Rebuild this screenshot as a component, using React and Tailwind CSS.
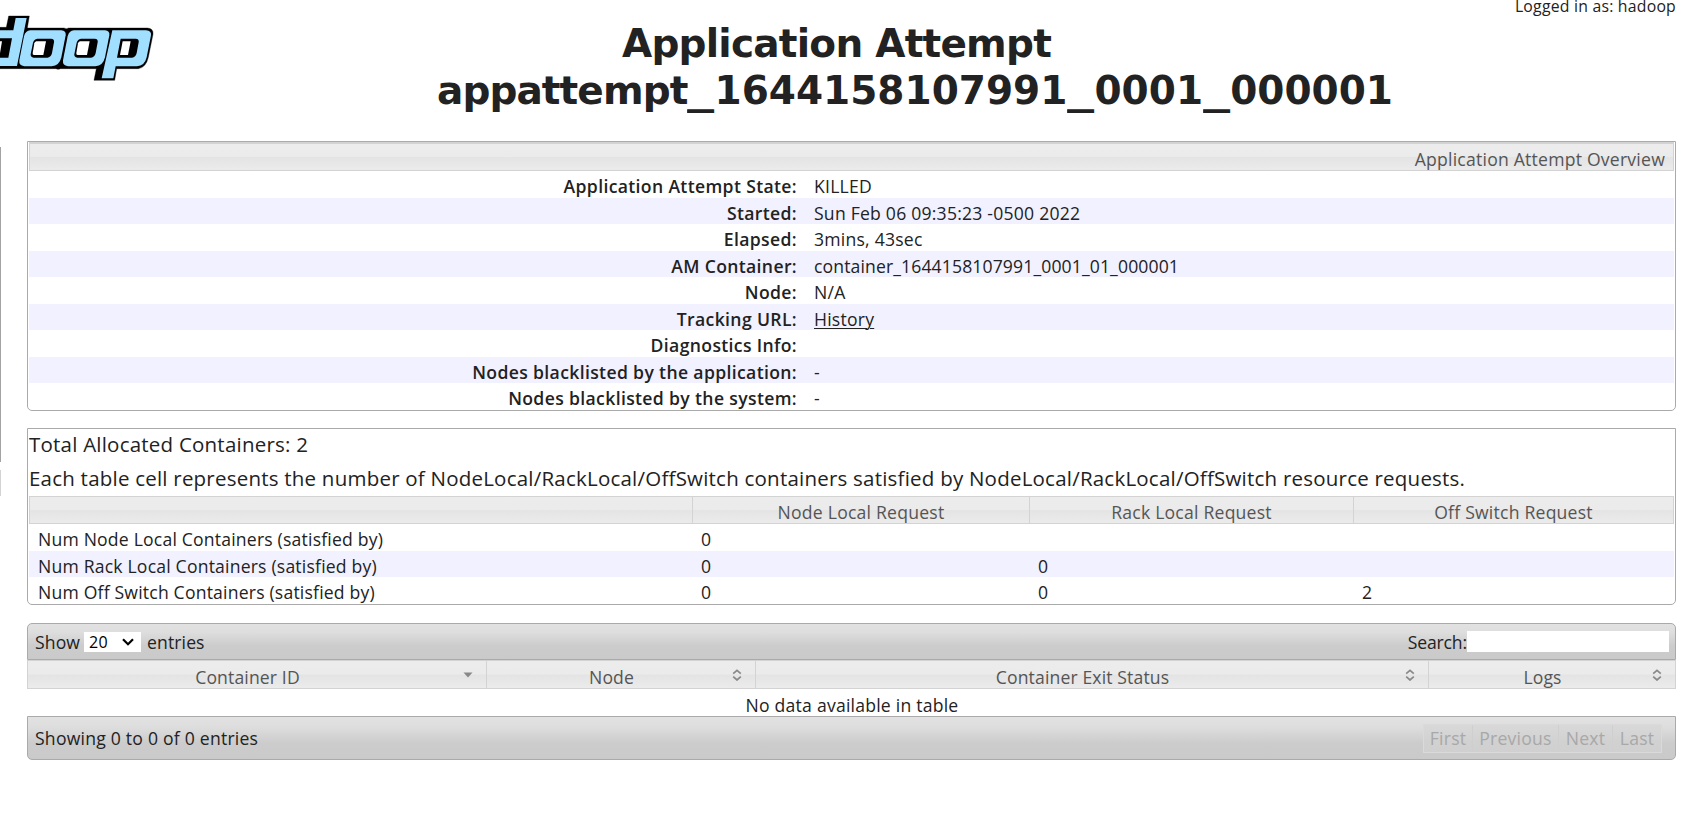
const overview = [
  ["Application Attempt State:", "KILLED"],
  ["Started:", "Sun Feb 06 09:35:23 -0500 2022"],
  ["Elapsed:", "3mins, 43sec"],
  ["AM Container:", "container_1644158107991_0001_01_000001"],
  ["Node:", "N/A"],
  ["Tracking URL:", "History", true],
  ["Diagnostics Info:", ""],
  ["Nodes blacklisted by the application:", "-"],
  ["Nodes blacklisted by the system:", "-"],
];

const containers = [
  ["Num Node Local Containers (satisfied by)", "0", "", ""],
  ["Num Rack Local Containers (satisfied by)", "0", "0", ""],
  ["Num Off Switch Containers (satisfied by)", "0", "0", "2"],
];

const headBg =
  "bg-[linear-gradient(#ececec_0%,#ebebeb_48%,#e4e4e4_52%,#ebebeb_100%)] text-[#555555] border-[#d3d3d3]";
const barBg =
  "bg-[linear-gradient(#e2e2e2_0%,#dddddd_25%,#cccccc_62%,#cacaca_100%)] border-[#aaaaaa]";

const stripe = (i) => (i % 2 ? "h-[26px] bg-[#f1f1ff]" : "h-[27px]");

function Logo() {
  return (
    <svg className="block h-[87px] w-[160px]" viewBox="0 0 480 261">
      <path
        d="M26 48H88L82 84H192Q199 88 206 84H442Q461 85 459 103L445 172Q438 203 415 206H350L344 241H282L289 206H181Q175 209 168 206H0V82H19Z"
        fill="#000"
        stroke="#000"
        strokeOpacity="0.35"
        strokeWidth="3"
      />
      <g fill="#a0dfff">
        <path d="M47 54H80L51 198H0V173H25L36 115H0V91H40Z" />
        <path d="M91 91H184Q199 92 197 106L184 172Q178 198 155 199H73Q56 197 58 181L72 109Q76 92 91 91Z" />
        <path d="M222 91H315Q330 92 328 106L315 172Q309 198 286 199H204Q187 197 189 181L203 109Q207 92 222 91Z" />
        <path d="M337 91H438Q455 92 453 106L440 172Q434 198 411 199H347L340 235H305Z" />
      </g>
      <g fill="#000">
        <path d="M112 116H153Q164 117 162 127L156 159Q153 172 142 173H101Q91 172 92 163L99 128Q102 117 112 116Z" />
        <path d="M243 116H284Q295 117 293 127L287 159Q284 172 273 173H232Q222 172 223 163L230 128Q233 117 243 116Z" />
        <path d="M362 116H407Q418 117 416 127L410 159Q407 172 396 173H351Z" />
      </g>
      <g fill="#fff">
        <path d="M109 124H138L130 165H102Q97 165 98 159L103 130Q104 125 109 124Z" />
        <path d="M240 124H269L261 165H233Q228 165 229 159L234 130Q235 125 240 124Z" />
        <path d="M368 124H392L384 165H360Z" />
        <path d="M0 124H6L0 160Z" />
      </g>
    </svg>
  );
}

function WideUnderscore() {
  return <span className="inline-block w-[27.15px] origin-left scale-x-[1.39]">_</span>;
}

function SortBoth() {
  return (
    <svg className="h-3 w-[10px] shrink-0" viewBox="0 0 10 12" fill="none" stroke="#888888" strokeWidth="1.7">
      <path d="M1.2 4.7 5 1.4 8.8 4.7M1.2 7.7 5 11 8.8 7.7" />
    </svg>
  );
}

function SortDown() {
  return (
    <svg className="h-3 w-[10px] shrink-0" viewBox="0 0 10 12">
      <path d="M.5 3.5h9L5 8.5z" fill="#888888" />
    </svg>
  );
}

function SortHead({ label, width, sorted, first }) {
  return (
    <div className={`flex h-[29px] items-center border-y border-r ${first ? "border-l" : ""} ${headBg} ${width}`}>
      <span className="flex-1 pt-[4px] pl-[4px] text-center leading-6 tracking-[0.13px]">{label}</span>
      <span className="mr-[13px] flex">{sorted ? <SortDown /> : <SortBoth />}</span>
    </div>
  );
}

export default function App() {
  return (
    <div className="flex h-[832px] w-[1682px] overflow-hidden bg-white font-['Open_Sans','Noto_Sans',sans-serif] text-[17.6px] tracking-[0.22px] text-[#222222]">
      <div className="flex w-full flex-col">
        <header className="flex h-[141px] shrink-0 items-start">
          <div className="w-[160px] shrink-0">
            <Logo />
          </div>
          <h1 className="w-[1236px] shrink-0 pt-[20px] pl-[277px] font-['DejaVu_Sans',sans-serif] text-[39px] leading-[47px] font-bold whitespace-nowrap">
            <span className="block pl-[185px] tracking-[-0.76px]">Application Attempt</span>
            <span className="block tracking-[0px]">
              <span className="tracking-[-0.9px]">appattempt</span>
              <WideUnderscore />
              1644158107991
              <WideUnderscore />
              0001
              <WideUnderscore />
              000001
            </span>
          </h1>
          <div className="flex-1 pr-[6px] text-right text-[15.8px] leading-[13px] whitespace-nowrap">Logged in as: hadoop</div>
        </header>
        <div className="flex">
          <aside className="w-[27px] shrink-0 pt-[6px]">
            <div className="h-[315px] w-px bg-[#a3a3a3]" />
            <div className="mt-2 h-[26px] w-px bg-[#d3d3d3]" />
          </aside>
          <main className="w-[1649px] shrink-0">
            <section className="h-[270px] rounded-b-[5px] border border-[#aaaaaa] px-px">
              <div className={`h-[29px] border border-t-2 pr-[8px] text-right leading-[30px] ${headBg}`}>
                Application Attempt Overview
              </div>
              {overview.map(([label, value, link], i) => (
                <div key={label} className={`flex leading-[31px] ${stripe(i)}`}>
                  <div className="w-[768px] text-right font-semibold tracking-[0.35px]">{label}</div>
                  <div className={`pl-[17px] ${value.length > 32 ? "tracking-[0.12px]" : ""}`}>
                    {link ? <a className="underline decoration-1 underline-offset-2">{value}</a> : value}
                  </div>
                </div>
              ))}
            </section>
            <section className="mt-[17px] h-[177px] rounded-b-[5px] border border-[#aaaaaa] px-px">
              <p className="h-[34px] text-[20.5px] leading-[30px]">Total Allocated Containers: 2</p>
              <p className="h-[33px] text-[20.5px] leading-[30px]">
                Each table cell represents the number of NodeLocal/RackLocal/OffSwitch containers satisfied by NodeLocal/RackLocal/OffSwitch resource requests.
              </p>
              <div className={`grid h-[28px] grid-cols-[663px_337px_324px_1fr] grid-rows-[26px] border text-center leading-[30px] ${headBg}`}>
                <div className="border-r border-[#d3d3d3]" />
                <div className="border-r border-[#d3d3d3]">Node Local Request</div>
                <div className="border-r border-[#d3d3d3]">Rack Local Request</div>
                <div>Off Switch Request</div>
              </div>
              {containers.map((row, i) => (
                <div key={row[0]} className={`grid grid-cols-[663px_337px_324px_1fr] leading-[31px] ${stripe(i)}`}>
                  {row.map((cell, j) => (
                    <div key={j} className="pl-[9px] tracking-[0.19px]">{cell}</div>
                  ))}
                </div>
              ))}
            </section>
            <section className="mt-[18px]">
              <div className={`flex h-[37px] items-center justify-between rounded-t-[5px] border pt-px pr-[6px] pl-[7px] ${barBg}`}>
                <div className="flex items-center">
                  <span className="tracking-[0.1px]">Show</span>
                  <span className="mr-[6px] ml-[4px] flex h-5 w-[57px] items-center justify-between bg-white pr-[7px] pl-[5px] text-[16px] text-black">
                    20
                    <svg className="h-2 w-3" viewBox="0 0 12 8" fill="none" stroke="#000" strokeWidth="2.2">
                      <path d="M1 1.2 6 6.2 11 1.2" />
                    </svg>
                  </span>
                  <span className="tracking-[0.1px]">entries</span>
                </div>
                <div className="flex items-center">
                  <span className="tracking-[-0.15px]">Search:</span>
                  <span className="h-[21px] w-[202px] bg-white" />
                </div>
              </div>
              <div className="flex whitespace-nowrap">
                <SortHead first sorted label="Container ID" width="w-[460px]" />
                <SortHead label="Node" width="w-[269px]" />
                <SortHead label="Container Exit Status" width="w-[673px]" />
                <SortHead label="Logs" width="w-[247px]" />
              </div>
              <div className="h-[27px] pl-px text-center leading-[32px]">No data available in table</div>
              <div className={`flex h-[44px] items-center justify-between rounded-b-[5px] border pr-[13px] pl-[7px] ${barBg}`}>
                <span>Showing 0 to 0 of 0 entries</span>
                <div className="flex h-[29px] border border-[#dadada] bg-[#d3d3d3]/60 leading-[27px] text-[#a8a8a8]">
                  <span className="w-[49px] border-r border-[#cfcfcf] text-center">First</span>
                  <span className="w-[86px] border-r border-[#cfcfcf] text-center">Previous</span>
                  <span className="w-[54px] border-r border-[#cfcfcf] text-center">Next</span>
                  <span className="w-[48px] text-center">Last</span>
                </div>
              </div>
            </section>
          </main>
        </div>
      </div>
    </div>
  );
}
